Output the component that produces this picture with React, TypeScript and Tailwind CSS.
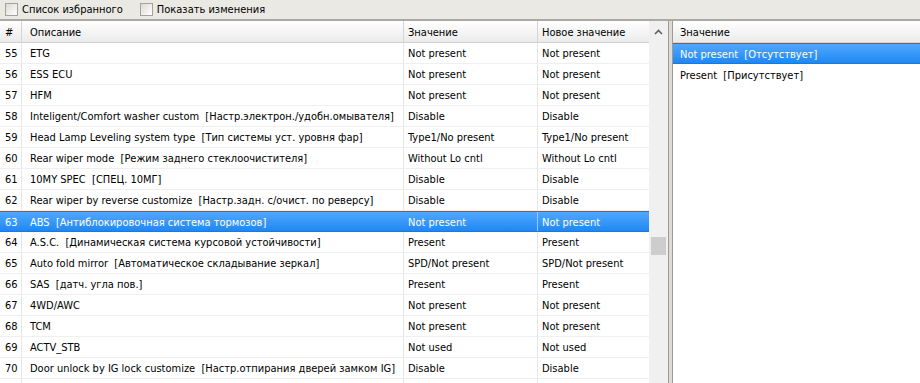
import React from "react";

type Row = { n: number; desc: string; val: string; next: string };

const ROWS: Row[] = [
  { n: 55, desc: "ETG", val: "Not present", next: "Not present" },
  { n: 56, desc: "ESS ECU", val: "Not present", next: "Not present" },
  { n: 57, desc: "HFM", val: "Not present", next: "Not present" },
  { n: 58, desc: "Inteligent/Comfort washer custom  [Настр.электрон./удобн.омывателя]", val: "Disable", next: "Disable" },
  { n: 59, desc: "Head Lamp Leveling system type  [Тип системы уст. уровня фар]", val: "Type1/No present", next: "Type1/No present" },
  { n: 60, desc: "Rear wiper mode  [Режим заднего стеклоочистителя]", val: "Without Lo cntl", next: "Without Lo cntl" },
  { n: 61, desc: "10MY SPEC  [СПЕЦ. 10МГ]", val: "Disable", next: "Disable" },
  { n: 62, desc: "Rear wiper by reverse customize  [Настр.задн. с/очист. по реверсу]", val: "Disable", next: "Disable" },
  { n: 63, desc: "ABS  [Антиблокировочная система тормозов]", val: "Not present", next: "Not present" },
  { n: 64, desc: "A.S.C.  [Динамическая система курсовой устойчивости]", val: "Present", next: "Present" },
  { n: 65, desc: "Auto fold mirror  [Автоматическое складывание зеркал]", val: "SPD/Not present", next: "SPD/Not present" },
  { n: 66, desc: "SAS  [датч. угла пов.]", val: "Present", next: "Present" },
  { n: 67, desc: "4WD/AWC", val: "Not present", next: "Not present" },
  { n: 68, desc: "TCM", val: "Not present", next: "Not present" },
  { n: 69, desc: "ACTV_STB", val: "Not used", next: "Not used" },
  { n: 70, desc: "Door unlock by IG lock customize  [Настр.отпирания дверей замком IG]", val: "Disable", next: "Disable" },
];

const SELECTED = 63;

const Check = ({ label }: { label: string }) => (
  <label className="flex items-center gap-[4px]">
    <span className="h-[13px] w-[13px] border border-[#a5a29c] bg-gradient-to-br from-[#dcdad5] to-white" />
    <span className="pt-[2px]">{label}</span>
  </label>
);

const headCell = "flex items-center pt-[3px] border-r border-[#d5d5d5] pl-[4px] bg-gradient-to-b from-white to-[#ebebeb]";

export default function App() {
  return (
    <div className="flex h-[383px] w-[920px] flex-col overflow-hidden bg-white text-[11px] text-black font-['DejaVu_Sans_Condensed','Liberation_Sans',sans-serif]">
      {/* toolbar */}
      <div className="flex h-[19px] shrink-0 items-center gap-[17px] bg-[#ebe9e4] pl-[5px]">
        <Check label="Список избранного" />
        <Check label="Показать изменения" />
      </div>
      <div className="h-[2px] shrink-0 bg-[#aca8a3]" />

      <div className="flex min-h-0 flex-1">
        {/* grid */}
        <div className="flex w-[649px] shrink-0 flex-col">
          <div className="flex h-[22px] shrink-0 border-b border-[#d0d0d0]">
            <div className={`${headCell} h-full w-[22px] pl-[5px]`}>#</div>
            <div className={`${headCell} h-full w-[382px] pl-[8px]`}>Описание</div>
            <div className={`${headCell} h-full w-[134px]`}>Значение</div>
            <div className={`${headCell} h-full flex-1 border-r-0`}>Новое значение</div>
          </div>
          {ROWS.map((r) => {
            const sel = r.n === SELECTED;
            return (
              <div
                key={r.n}
                className={`flex h-[21px] shrink-0 items-center whitespace-pre ${
                  sel
                    ? "border-y border-[#2a74c9] bg-gradient-to-b from-[#4fa8ff] to-[#1c88f2] text-white"
                    : "border-b border-[#efefef]"
                }`}
              >
                <div className={`flex h-full w-[22px] items-center pt-[3px] pl-[5px] ${sel ? "" : "border-r border-[#e6e6e6]"}`}>{r.n}</div>
                <div className={`flex h-full w-[382px] items-center overflow-hidden pt-[3px] pl-[8px] ${sel ? "" : "border-r border-[#e6e6e6]"}`}>{r.desc}</div>
                <div className={`flex h-full w-[134px] items-center pt-[3px] pl-[4px] border-r ${sel ? "border-[#9cc9f5]" : "border-[#e6e6e6]"}`}>{r.val}</div>
                <div className="flex h-full flex-1 items-center pt-[3px] pl-[4px]">{r.next}</div>
              </div>
            );
          })}
          <div className="flex h-[21px] shrink-0">
            <div className="h-full w-[22px] border-r border-[#e6e6e6]" />
            <div className="h-full w-[382px] border-r border-[#e6e6e6]" />
            <div className="h-full w-[134px] border-r border-[#e6e6e6]" />
          </div>
        </div>

        {/* scrollbar */}
        <div className="relative w-[19px] shrink-0 bg-[#f0f0f0]">
          <svg className="absolute left-[5px] top-[8px]" width="9" height="6" viewBox="0 0 9 6">
            <path d="M1 5 L4.5 1.5 L8 5" fill="none" stroke="#606060" strokeWidth="1.6" />
          </svg>
          <div className="absolute left-[2px] top-[216px] h-[18px] w-[15px] bg-[#cdcdcd]" />
        </div>

        {/* splitter */}
        <div className="w-[5px] shrink-0 border-x border-[#9e9a95] bg-[#dedbd6]" />

        {/* right panel */}
        <div className="flex min-w-0 flex-1 flex-col">
          <div className={`${headCell} h-[22px] shrink-0 border-r-0 border-b border-[#d0d0d0] pl-[7px]`}>Значение</div>
          <div className="flex h-[21px] shrink-0 items-center whitespace-pre border-y border-[#2a74c9] bg-gradient-to-b from-[#4fa8ff] to-[#1c88f2] pt-[3px] pl-[7px] text-white">
            Not present  [Отсутствует]
          </div>
          <div className="flex h-[21px] shrink-0 items-center whitespace-pre pt-[3px] pl-[7px]">Present  [Присутствует]</div>
        </div>
      </div>
    </div>
  );
}
